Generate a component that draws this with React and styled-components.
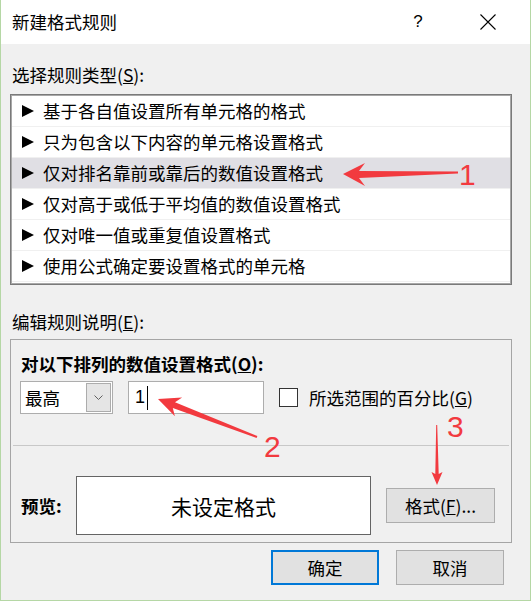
import React from "react";
import styled, { createGlobalStyle } from "styled-components";

const GlobalStyle = createGlobalStyle`
  html, body { margin: 0; padding: 0; background: #f0f0f0; }
  body { font-family: "Noto Sans CJK SC", "Microsoft YaHei", sans-serif; color: #000; }
  * { box-sizing: border-box; }
`;

const Window = styled.div`
  position: relative;
  width: 531px;
  height: 601px;
  background: #f0f0f0;
  border: 1px solid #b5d7a5;
  border-top: none;
  display: flex;
  flex-direction: column;
  overflow: hidden;
  font-size: 17.5px;
`;

const TitleBar = styled.div`
  height: 44px;
  flex: none;
  background: #fff;
  display: flex;
  align-items: center;
  padding-left: 11px;
  padding-right: 7px;
`;

const Title = styled.div`
  flex: 1;
  font-size: 17.5px;
  line-height: 24px;
`;

const TitleButton = styled.div`
  width: 70px;
  height: 44px;
  display: flex;
  align-items: center;
  justify-content: center;
  font-family: "Liberation Sans", Arial, sans-serif;
  font-size: 17px;
`;

const Body = styled.div`
  flex: 1;
  display: flex;
  flex-direction: column;
  padding: 19px 18px 0 9px;
`;

const SectionLabel = styled.div`
  line-height: 24px;
  padding-left: 2px;
  margin-top: ${(p) => p.$mt || 0}px;
`;

const List = styled.div`
  margin-top: 7px;
  background: #fff;
  border: 1px solid #7a7a7a;
  box-shadow: inset 0 0 0 1px #a8a8a8;
  padding: 1px 1px 2px;
`;

const Row = styled.div`
  height: 31px;
  display: flex;
  align-items: center;
  gap: 9px;
  padding-left: 10px;
  border-bottom: 1px solid #f0f0f0;
  background: ${(p) => (p.$selected ? "#e0dfe4" : "transparent")};
  line-height: 24px;
`;

const Group = styled.div`
  margin-top: 5px;
  border: 1px solid #a5a5a5;
  display: flex;
  flex-direction: column;
`;

const TopSection = styled.div`
  padding: 12px 0 0 10px;
`;

const BoldText = styled.div`
  font-weight: 700;
  line-height: 24px;
`;

const ControlsRow = styled.div`
  margin-top: 5px;
  height: 33px;
  display: flex;
  align-items: center;
`;

const Combo = styled.div`
  margin-left: -1px;
  width: 93px;
  height: 33px;
  border: 1px solid #adadad;
  background: #fff;
  padding: 1px;
  display: flex;
`;

const ComboText = styled.div`
  flex: 1;
  padding-left: 3px;
  line-height: 29px;
`;

const DropButton = styled.div`
  width: 25px;
  background: #e5e5e5;
  border: 1px solid #acacac;
  display: flex;
  align-items: center;
  justify-content: center;
`;

const TextInput = styled.div`
  margin-left: 15px;
  width: 136px;
  height: 33px;
  border: 1px solid #adadad;
  background: #fff;
  display: flex;
  align-items: center;
  padding-left: 6px;
  font-family: "Liberation Sans", Arial, sans-serif;
  font-size: 18px;
`;

const Caret = styled.span`
  display: inline-block;
  width: 1px;
  height: 24px;
  background: #000;
  margin-left: 2px;
`;

const CheckBox = styled.div`
  margin-left: 15px;
  width: 19px;
  height: 19px;
  border: 1px solid #333;
  background: #fff;
`;

const CheckLabel = styled.div`
  margin-left: 11px;
  line-height: 24px;
`;

const Separator = styled.div`
  margin: 31px 2px 0;
  height: 1px;
  background: #c8c8c8;
`;

const PreviewSection = styled.div`
  padding: 30px 0 7px 10px;
  display: flex;
  align-items: center;
`;

const PreviewLabel = styled(BoldText)`
  width: 55px;
`;

const PreviewBox = styled.div`
  width: 295px;
  height: 59px;
  border: 1px solid #646464;
  background: #fff;
  display: flex;
  align-items: center;
  justify-content: center;
  font-size: 21px;
`;

const Button = styled.div`
  width: ${(p) => p.$w || 108}px;
  height: 35px;
  margin-left: ${(p) => p.$ml || 0}px;
  background: #e1e1e1;
  border: ${(p) => (p.$primary ? "2px solid #0078d7" : "1px solid #adadad")};
  display: flex;
  align-items: center;
  justify-content: center;
  line-height: 24px;
`;

const Footer = styled.div`
  margin-top: 7px;
  display: flex;
  justify-content: flex-end;
  gap: 17px;
  padding-right: 8px;
`;

const Overlay = styled.svg`
  position: absolute;
  left: -1px;
  top: 0;
  pointer-events: none;
`;

const Callout = styled.span`
  position: absolute;
  left: ${(p) => p.$x}px;
  top: ${(p) => p.$y}px;
  font-family: "Liberation Sans", Arial, sans-serif;
  font-size: 30px;
  line-height: 30px;
  color: #f23a3f;
`;

const Tri = () => (
  <svg width="12" height="12" viewBox="0 0 12 12">
    <polygon points="0,0 12,6 0,12" fill="#000" />
  </svg>
);

const items = [
  "基于各自值设置所有单元格的格式",
  "只为包含以下内容的单元格设置格式",
  "仅对排名靠前或靠后的数值设置格式",
  "仅对高于或低于平均值的数值设置格式",
  "仅对唯一值或重复值设置格式",
  "使用公式确定要设置格式的单元格",
];

export default function App() {
  return (
    <>
      <GlobalStyle />
      <Window>
        <TitleBar>
          <Title>新建格式规则</Title>
          <TitleButton>?</TitleButton>
          <TitleButton>
            <svg width="16" height="16" viewBox="0 0 16 16">
              <path d="M0.5 0.5 L15.5 15.5 M15.5 0.5 L0.5 15.5" stroke="#000" strokeWidth="1.1" />
            </svg>
          </TitleButton>
        </TitleBar>
        <Body>
          <SectionLabel>
            选择规则类型(<u>S</u>):
          </SectionLabel>
          <List>
            {items.map((t, i) => (
              <Row key={t} $selected={i === 2}>
                <Tri />
                <span>{t}</span>
              </Row>
            ))}
          </List>
          <SectionLabel $mt={25}>
            编辑规则说明(<u>E</u>):
          </SectionLabel>
          <Group>
            <TopSection>
              <BoldText>
                对以下排列的数值设置格式(<u>O</u>):
              </BoldText>
              <ControlsRow>
                <Combo>
                  <ComboText>最高</ComboText>
                  <DropButton>
                    <svg width="9" height="5" viewBox="0 0 9 5">
                      <polyline points="0.5,0.5 4.5,4.5 8.5,0.5" fill="none" stroke="#606060" strokeWidth="1" />
                    </svg>
                  </DropButton>
                </Combo>
                <TextInput>
                  1<Caret />
                </TextInput>
                <CheckBox />
                <CheckLabel>
                  所选范围的百分比(<u>G</u>)
                </CheckLabel>
              </ControlsRow>
            </TopSection>
            <Separator />
            <PreviewSection>
              <PreviewLabel>预览:</PreviewLabel>
              <PreviewBox>未设定格式</PreviewBox>
              <Button $w={109} $ml={15}>
                格式(<u>F</u>)...
              </Button>
            </PreviewSection>
          </Group>
          <Footer>
            <Button $primary>确定</Button>
            <Button>取消</Button>
          </Footer>
        </Body>
        <Overlay width="531" height="601" viewBox="0 0 531 601">
          <polygon
            points="343,174 365,163 359,171 458,171.6 458,173.6 359,178 365,186"
            fill="#f23a3f"
          />
          <polygon
            points="158,399 182.1,397.6 175,402.3 257.4,436.1 256.6,437.9 172.8,407.9 174.9,416.2"
            fill="#f23a3f"
          />
          <polygon
            points="437,485 431.5,472 435.3,474 436.2,425 437.2,425 438.7,474 442.5,472"
            fill="#f23a3f"
          />
        </Overlay>
        <Callout $x={458} $y={160}>1</Callout>
        <Callout $x={263} $y={432}>2</Callout>
        <Callout $x={446} $y={412}>3</Callout>
      </Window>
    </>
  );
}
